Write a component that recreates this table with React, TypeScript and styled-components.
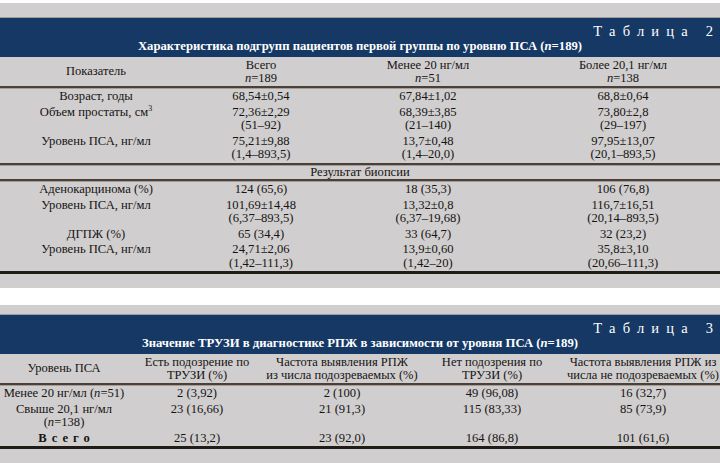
import React from "react";
import styled, { createGlobalStyle } from "styled-components";

const Global = createGlobalStyle`
  html, body { margin: 0; padding: 0; background: #ffffff; }
  body { font-family: "Liberation Serif", "Times New Roman", serif; }
`;

const Page = styled.main`
  width: 720px;
  padding-top: 3px;
  display: flex;
  flex-direction: column;
  gap: 17px;
`;

const Panel = styled.section<{ $band: number; $tail: number }>`
  background: #d0cece;
  padding-top: ${(p) => p.$band}px;
  padding-bottom: ${(p) => p.$tail}px;
`;

const Header = styled.header`
  background: #163864;
  border-top: 1px solid #a09c9c;
  height: 40px;
  box-sizing: border-box;
  padding: 6px 7px 4px;
  color: #ffffff;
  display: flex;
  flex-direction: column;
`;

const TableNo = styled.div`
  align-self: flex-end;
  font-size: 14.5px;
  line-height: 15px;
  letter-spacing: 7.2px;
  margin-right: -7.2px;
  white-space: pre;
`;

const Title = styled.h2`
  margin: 0;
  text-align: center;
  font-size: 12.7px;
  line-height: 15px;
  font-weight: bold;
`;

const Grid = styled.table`
  width: 720px;
  border-collapse: collapse;
  table-layout: fixed;
  font-size: 12.6px;
  line-height: 13.5px;
  color: #161412;
`;

const HeadCell = styled.th`
  padding: 1px 0 0;
  font-size: 12.5px;
  font-weight: normal;
  text-align: center;
  vertical-align: middle;
  white-space: pre;
  height: 28px;
`;

const Cell = styled.td`
  padding: 1px 0;
  text-align: center;
  vertical-align: top;
  white-space: pre;
`;

const SectionCell = styled.td`
  padding: 0;
  text-align: center;
  white-space: pre;
`;

const RuleCell = styled.td<{ $kind: "double" | "heavy" }>`
  padding: 0;
  font-size: 0;
  line-height: 0;
  height: ${(p) => (p.$kind === "heavy" ? 3 : 2)}px;
  background: ${(p) => (p.$kind === "heavy" ? "#221c16" : "#4a4038")};
  border-bottom: ${(p) => (p.$kind === "heavy" ? "none" : "1px solid #a49d98")};
`;

const Spaced = styled.span`
  font-weight: bold;
  letter-spacing: 0.4em;
  margin-right: -0.4em;
`;

const I = styled.i`
  font-style: italic;
`;

const Sup = styled.sup`
  font-size: 8px;
  line-height: 0;
  vertical-align: top;
  position: relative;
  top: 3px;
`;

const Rule = ({ span, kind }: { span: number; kind: "double" | "heavy" }) => (
  <tr>
    <RuleCell colSpan={span} $kind={kind} />
  </tr>
);

const Row = ({ cells }: { cells: React.ReactNode[] }) => (
  <tr>
    {cells.map((c, i) => (
      <Cell key={i}>{c}</Cell>
    ))}
  </tr>
);

const N = ({ v }: { v: string }) => (
  <>
    <I>n</I>={v}
  </>
);

const t1Top: React.ReactNode[][] = [
  ["Возраст, годы", "68,54±0,54", "67,84±1,02", "68,8±0,64"],
  [
    <>
      Объем простаты, см<Sup>3</Sup>
    </>,
    "72,36±2,29\n(51–92)",
    "68,39±3,85\n(21–140)",
    "73,80±2,8\n(29–197)",
  ],
  ["Уровень ПСА, нг/мл", "75,21±9,88\n(1,4–893,5)", "13,7±0,48\n(1,4–20,0)", "97,95±13,07\n(20,1–893,5)"],
];

const t1Bottom: React.ReactNode[][] = [
  ["Аденокарцинома (%)", "124 (65,6)", "18 (35,3)", "106 (76,8)"],
  ["Уровень ПСА, нг/мл", "101,69±14,48\n(6,37–893,5)", "13,32±0,8\n(6,37–19,68)", "116,7±16,51\n(20,14–893,5)"],
  ["ДГПЖ (%)", "65 (34,4)", "33 (64,7)", "32 (23,2)"],
  ["Уровень ПСА, нг/мл", "24,71±2,06\n(1,42–111,3)", "13,9±0,60\n(1,42–20)", "35,8±3,10\n(20,66–111,3)"],
];

const t2Rows: React.ReactNode[][] = [
  [
    <>
      Менее 20 нг/мл (<N v="51" />)
    </>,
    "2 (3,92)",
    "2 (100)",
    "49 (96,08)",
    "16 (32,7)",
  ],
  [
    <>
      Свыше 20,1 нг/мл{"\n"}(<N v="138" />)
    </>,
    "23 (16,66)",
    "21 (91,3)",
    "115 (83,33)",
    "85 (73,9)",
  ],
  [<Spaced>Всего</Spaced>, "25 (13,2)", "23 (92,0)", "164 (86,8)", "101 (61,6)"],
];

export default function App() {
  return (
    <>
      <Global />
      <Page>
        <Panel $band={14} $tail={14}>
          <Header>
            <TableNo>Таблица 2</TableNo>
            <Title>
              Характеристика подгрупп пациентов первой группы по уровню ПСА (<I>n</I>=189)
            </Title>
          </Header>
          <Grid>
            <colgroup>
              <col style={{ width: 192 }} />
              <col style={{ width: 138 }} />
              <col style={{ width: 196 }} />
              <col style={{ width: 194 }} />
            </colgroup>
            <thead>
              <tr>
                <HeadCell>Показатель</HeadCell>
                <HeadCell>
                  Всего{"\n"}
                  <N v="189" />
                </HeadCell>
                <HeadCell>
                  Менее 20 нг/мл{"\n"}
                  <N v="51" />
                </HeadCell>
                <HeadCell>
                  Более 20,1 нг/мл{"\n"}
                  <N v="138" />
                </HeadCell>
              </tr>
            </thead>
            <tbody>
              <Rule span={4} kind="double" />
              {t1Top.map((r, i) => (
                <Row key={i} cells={r} />
              ))}
              <Rule span={4} kind="double" />
              <tr>
                <SectionCell colSpan={4}>Результат биопсии</SectionCell>
              </tr>
              <Rule span={4} kind="double" />
              {t1Bottom.map((r, i) => (
                <Row key={i} cells={r} />
              ))}
              <Rule span={4} kind="heavy" />
            </tbody>
          </Grid>
        </Panel>
        <Panel $band={9} $tail={20}>
          <Header>
            <TableNo>Таблица 3</TableNo>
            <Title>
              Значение ТРУЗИ в диагностике РПЖ в зависимости от уровня ПСА (<I>n</I>=189)
            </Title>
          </Header>
          <Grid>
            <colgroup>
              <col style={{ width: 128 }} />
              <col style={{ width: 138 }} />
              <col style={{ width: 152 }} />
              <col style={{ width: 148 }} />
              <col style={{ width: 154 }} />
            </colgroup>
            <thead>
              <tr>
                <HeadCell>Уровень ПСА</HeadCell>
                <HeadCell>{"Есть подозрение по\nТРУЗИ (%)"}</HeadCell>
                <HeadCell>{"Частота выявления РПЖ\nиз числа подозреваемых (%)"}</HeadCell>
                <HeadCell>{"Нет подозрения по\nТРУЗИ (%)"}</HeadCell>
                <HeadCell>{"Частота выявления РПЖ из\nчисла не подозреваемых (%)"}</HeadCell>
              </tr>
            </thead>
            <tbody>
              <Rule span={5} kind="double" />
              {t2Rows.map((r, i) => (
                <Row key={i} cells={r} />
              ))}
              <Rule span={5} kind="heavy" />
            </tbody>
          </Grid>
        </Panel>
      </Page>
    </>
  );
}
